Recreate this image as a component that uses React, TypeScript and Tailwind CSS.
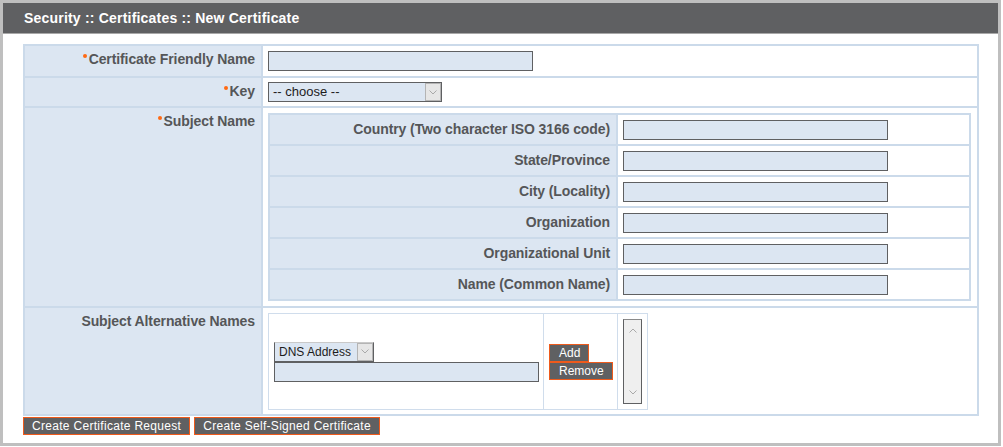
import React from 'react'

const label = "font-['Liberation_Sans',Arial,sans-serif] text-[14px] font-bold tracking-[-0.1px] leading-[17px] text-[#555658]"

function Dot() {
  return <span className="mt-[3px] mr-[2px] inline-block size-[4px] shrink-0 rounded-full bg-[#ff6a13]" />
}

function TextBox({ className = 'w-[265px]' }: { className?: string }) {
  return <input type="text" className={`block h-[20px] border border-[#5f6062] bg-[#dce6f2] outline-none ${className}`} />
}

function Chevron({ up = false }: { up?: boolean }) {
  return (
    <svg width="8" height="5" viewBox="0 0 8 5" className="block">
      <polyline
        points={up ? '0.5,4.5 4,1 7.5,4.5' : '0.5,0.5 4,4 7.5,0.5'}
        fill="none"
        stroke="#a9a9a9"
        strokeWidth="1"
      />
    </svg>
  )
}

function FakeSelect({ text, width, textSize, topLight }: { text: string; width: string; textSize: string; topLight?: boolean }) {
  return (
    <div
      className={`flex h-[20px] items-center border border-[#5f6062] bg-[#dce6f2] ${width} ${topLight ? 'border-t-[#c9c9c9]' : ''}`}
    >
      <span className={`flex-1 pl-[4px] font-['Liberation_Sans',Arial,sans-serif] leading-[18px] text-[#1c1c1c] ${textSize}`}>
        {text}
      </span>
      <span className="flex h-[18px] w-[16px] items-center justify-center border border-[#b4b4b4] bg-[#e6e6e6]">
        <Chevron />
      </span>
    </div>
  )
}

function OrangeButton({ children, className = '' }: { children: React.ReactNode; className?: string }) {
  return (
    <button
      type="button"
      className={`h-[18px] border border-[#ee5a1c] bg-[#5f6062] font-['Liberation_Sans',Arial,sans-serif] text-[12px] leading-[16px] text-white ${className}`}
    >
      {children}
    </button>
  )
}

const subjectFields = [
  'Country (Two character ISO 3166 code)',
  'State/Province',
  'City (Locality)',
  'Organization',
  'Organizational Unit',
  'Name (Common Name)',
]

export default function App() {
  return (
    <div className="w-[1001px] border-[3px] border-[#bfbfbf] bg-white">
      <div className="flex h-[31px] items-center border-b border-[#a8a8a8] bg-[#5f6062] pl-[21px]">
        <h1 className="font-['Liberation_Sans',Arial,sans-serif] text-[14px] font-bold tracking-[0.2px] text-white">
          Security :: Certificates :: New Certificate
        </h1>
      </div>

      <div className="pt-[10px] pr-[19px] pb-[8px] pl-[20px]">
        <div className="flex flex-col gap-[2px] border-2 border-[#cbdaea] bg-[#cbdaea]">
          <div className="flex h-[30px] gap-[2px]">
            <div className={`flex w-[236px] shrink-0 justify-end bg-[#dce6f2] pt-[5px] pr-[6px] ${label}`}>
              <Dot />
              Certificate Friendly Name
            </div>
            <div className="flex flex-1 items-center bg-white pl-[5px]">
              <TextBox />
            </div>
          </div>

          <div className="flex h-[28px] gap-[2px]">
            <div className={`flex w-[236px] shrink-0 justify-end bg-[#dce6f2] pt-[5px] pr-[6px] ${label}`}>
              <Dot />
              Key
            </div>
            <div className="flex flex-1 items-center bg-white pl-[5px]">
              <FakeSelect text="-- choose --" width="w-[174px]" textSize="text-[13px]" />
            </div>
          </div>

          <div className="flex h-[198px] gap-[2px]">
            <div className={`flex w-[236px] shrink-0 justify-end bg-[#dce6f2] pt-[5px] pr-[6px] ${label}`}>
              <Dot />
              Subject Name
            </div>
            <div className="flex-1 bg-white pt-[5px] pr-[6px] pb-[5px] pl-[5px]">
              <div className="flex flex-col gap-[2px] border-2 border-[#cbdaea] bg-[#cbdaea]">
                {subjectFields.map((name) => (
                  <div key={name} className="flex h-[29px] gap-[2px]">
                    <div className={`flex w-[346px] shrink-0 items-center justify-end bg-[#dce6f2] pr-[6px] ${label}`}>
                      {name}
                    </div>
                    <div className="flex flex-1 items-center bg-white pl-[5px]">
                      <TextBox />
                    </div>
                  </div>
                ))}
              </div>
            </div>
          </div>

          <div className="flex h-[106px] gap-[2px]">
            <div className={`flex w-[236px] shrink-0 justify-end bg-[#dce6f2] pt-[5px] pr-[6px] ${label}`}>
              Subject Alternative Names
            </div>
            <div className="flex-1 bg-white pt-[5px] pl-[5px]">
              <div className="flex w-fit border border-[#d0ddec]">
                <div className="flex h-[95px] w-[275px] flex-col justify-center border-r border-[#d0ddec] px-[5px]">
                  <FakeSelect text="DNS Address" width="w-[100px]" textSize="text-[12px]" topLight />
                  <TextBox />
                </div>
                <div className="flex w-[74px] flex-col items-start justify-center border-r border-[#d0ddec] px-[5px]">
                  <OrangeButton className="pr-[8px] pl-[9px]">Add</OrangeButton>
                  <OrangeButton className="pr-[8px] pl-[9px]">Remove</OrangeButton>
                </div>
                <div className="p-[5px]">
                  <div className="flex h-[85px] w-[19px] flex-col items-center justify-between border border-[#5f6062] border-t-[#8a8a8a] bg-[#efefef] py-[8px]">
                    <Chevron up />
                    <Chevron />
                  </div>
                </div>
              </div>
            </div>
          </div>
        </div>

        <div className="mt-[1px] flex gap-[4px]">
          <OrangeButton className="px-[8px] tracking-[0.3px]">Create Certificate Request</OrangeButton>
          <OrangeButton className="px-[8px] tracking-[0.3px]">Create Self-Signed Certificate</OrangeButton>
        </div>
      </div>
    </div>
  )
}
